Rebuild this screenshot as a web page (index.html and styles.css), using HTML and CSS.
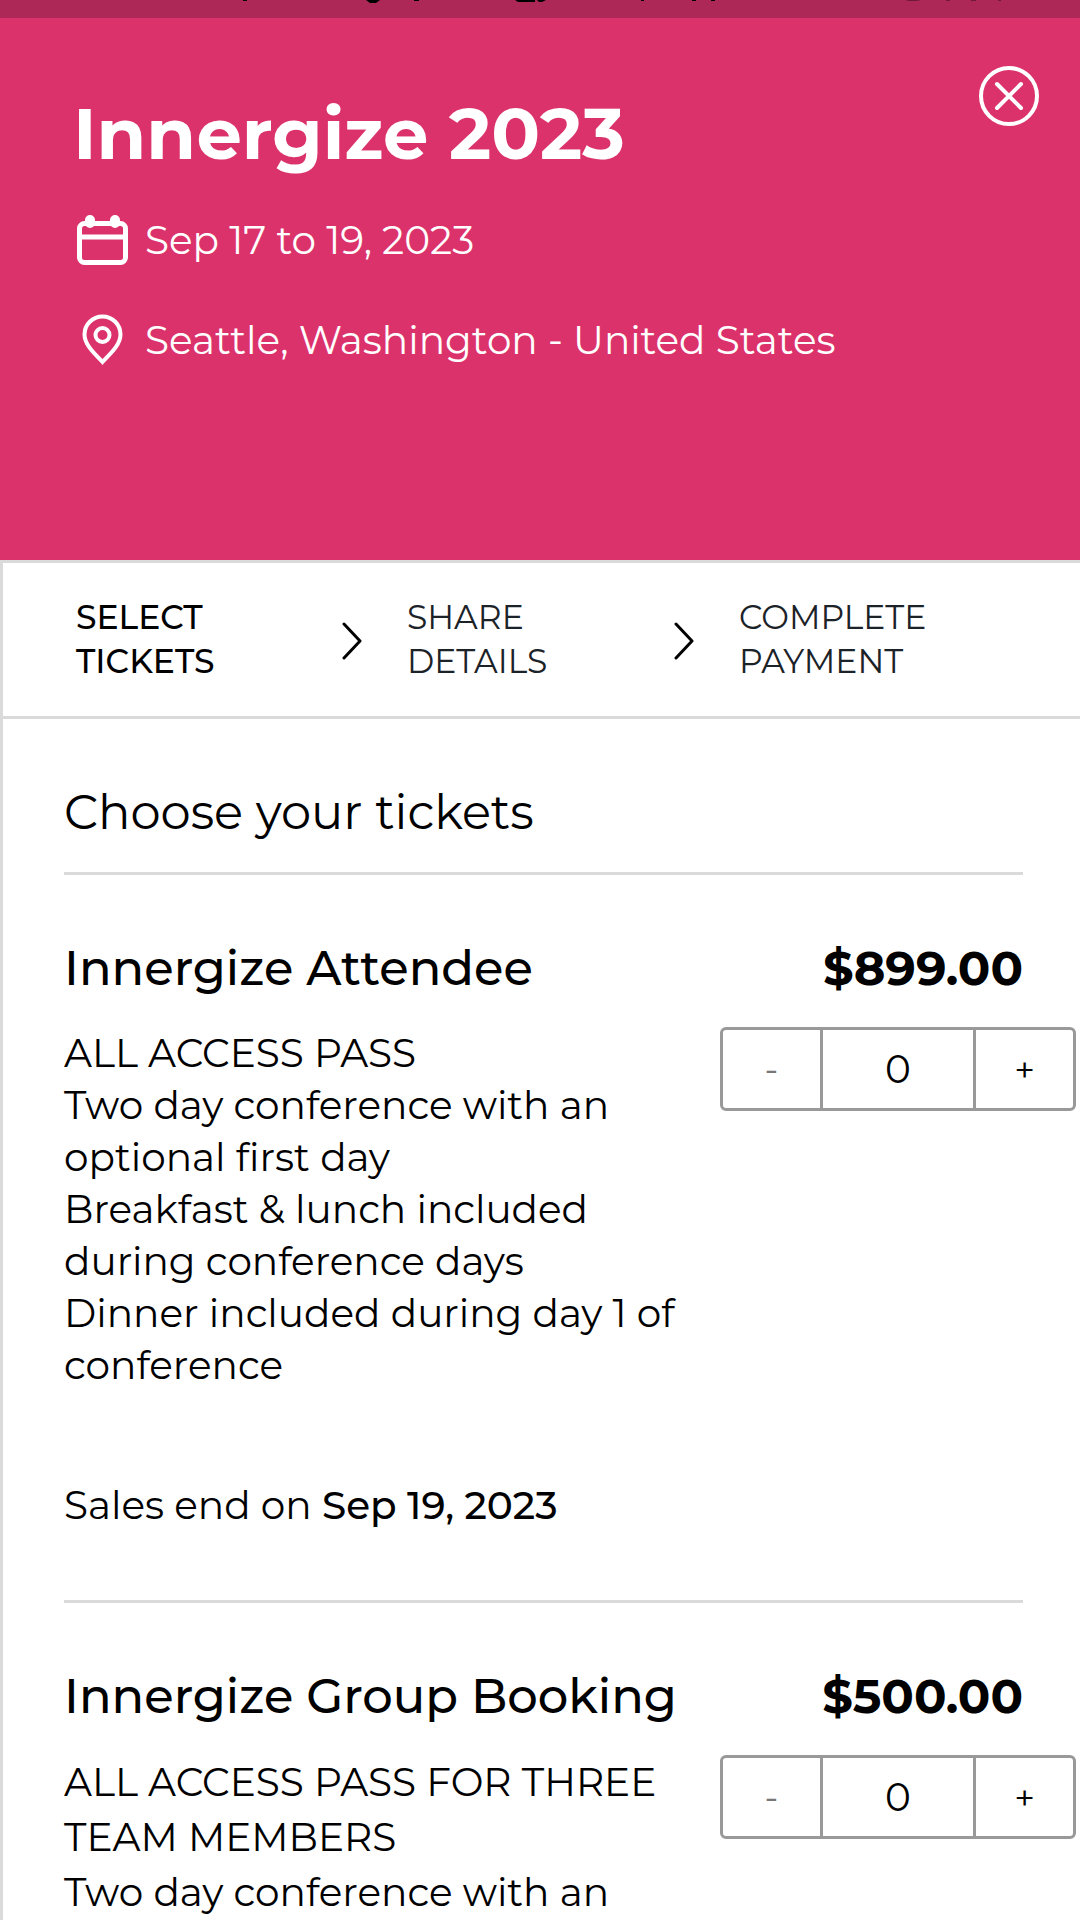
FILE: index.html
```html
<!DOCTYPE html>
<html lang="en">
<head>
<meta charset="utf-8">
<meta name="viewport" content="width=device-width, initial-scale=1">
<title>Innergize 2023</title>
<link rel="stylesheet" href="styles.css">
</head>
<body>
<header class="event">
  <div class="status" aria-hidden="true">
    <svg class="status-marks" viewBox="0 0 1080 18" preserveAspectRatio="none">
      <path d="M243 0h4v1h-4zM366 0h14l-4 3h-6zM414 0h5v1h-5zM515 0h20v2h-17zM537 0h9l-4 2h-3zM641 0h3v1h-3zM692 0h4v1h-4zM711 0h4v1h-4z"/>
      <path class="faint" d="M905 0h16l-4 1h-8zM946 0h4v1h-4zM971 0h5v1h-5zM998 0h3v1h-3z"/>
    </svg>
  </div>
  <div class="event-body">
    <div class="event-info">
      <h1 class="event-title">Innergize 2023</h1>
      <p class="event-meta">
        <svg class="meta-icon" viewBox="-2 0 56 54" fill="none" stroke="currentColor" stroke-width="5">
          <rect x="4.500" y="10.500" width="46" height="39" rx="5"/>
          <path d="M4 24h46"/>
          <path d="M15 10V7M40 10V7" stroke-width="10" stroke-linecap="round"/>
        </svg>
        Sep 17 to 19, 2023
      </p>
      <p class="event-meta">
        <svg class="meta-icon" viewBox="-2 0 56 54" fill="none" stroke="currentColor" stroke-width="4">
          <path d="M27.500 49C20 41 9.500 32 9.500 21.500a18 18 0 0 1 36 0C45.500 32 35 41 27.500 49z"/>
          <circle cx="27.500" cy="22" r="7"/>
        </svg>
        Seattle, Washington - United States
      </p>
    </div>
    <button class="close" type="button" aria-label="Close">
      <svg class="close-icon" viewBox="0 0 62 62" fill="none" stroke="currentColor" stroke-width="4" stroke-linecap="round">
        <circle cx="31" cy="31" r="28"/>
        <path d="M19 19l24 24M43 19L19 43"/>
      </svg>
    </button>
  </div>
</header>
<main class="panel">
  <ol class="steps">
    <li class="step step-current">Select<br>tickets</li>
    <li class="step">
      <svg class="chevron" viewBox="0 0 20 38" fill="none" stroke="currentColor" stroke-width="3" stroke-linecap="round" stroke-linejoin="round"><path d="M2 2l16 17L2 36"/></svg>
      <span>Share<br>details</span>
    </li>
    <li class="step">
      <svg class="chevron" viewBox="0 0 20 38" fill="none" stroke="currentColor" stroke-width="3" stroke-linecap="round" stroke-linejoin="round"><path d="M2 2l16 17L2 36"/></svg>
      <span>Complete<br>payment</span>
    </li>
  </ol>
  <section class="tickets">
    <h2 class="tickets-title">Choose your tickets</h2>
    <article class="ticket">
      <div class="ticket-head">
        <h3 class="ticket-name">Innergize Attendee</h3>
        <strong class="price">$899.00</strong>
      </div>
      <div class="ticket-body">
        <div class="ticket-text">
          <p class="desc">ALL ACCESS PASS<br>Two day conference with an<br>optional first day<br>Breakfast &amp; lunch included<br>during conference days<br>Dinner included during day 1 of<br>conference</p>
          <p class="sales">Sales end on <b class="date">Sep 19, 2023</b></p>
        </div>
        <div class="stepper">
          <button class="step-btn" type="button" aria-label="Remove one Attendee ticket" disabled>-</button>
          <input class="qty" type="text" inputmode="numeric" value="0" aria-label="Attendee ticket quantity">
          <button class="step-btn" type="button" aria-label="Add one Attendee ticket">+</button>
        </div>
      </div>
    </article>
    <article class="ticket">
      <div class="ticket-head">
        <h3 class="ticket-name">Innergize Group Booking</h3>
        <strong class="price">$500.00</strong>
      </div>
      <div class="ticket-body">
        <div class="ticket-text">
          <p class="desc desc-loose">ALL ACCESS PASS FOR THREE<br>TEAM MEMBERS<br>Two day conference with an</p>
        </div>
        <div class="stepper">
          <button class="step-btn" type="button" aria-label="Remove one Group Booking ticket" disabled>-</button>
          <input class="qty" type="text" inputmode="numeric" value="0" aria-label="Group Booking ticket quantity">
          <button class="step-btn" type="button" aria-label="Add one Group Booking ticket">+</button>
        </div>
      </div>
    </article>
  </section>
</main>
</body>
</html>
```
FILE: styles.css
```css
* { box-sizing: border-box; }

body {
  margin: 0;
  background: #fff;
  color: #000;
  font-family: Montserrat, Inter, "Open Sans", sans-serif;
  font-size: 39px;
  font-weight: 400;
  line-height: 52px;
  overflow: hidden;
}

h1, h2, h3, p, ol { margin: 0; padding: 0; }

/* Event banner */
.event {
  min-height: 560px;
  background: #dc326c;
  color: #fff;
}
.status { height: 18px; background: #ad2856; }
.status-marks { display: block; width: 100%; height: 18px; fill: #000; }
.faint { fill: #701a38; }
.event-body {
  display: flex;
  justify-content: space-between;
  align-items: flex-start;
  padding: 47px 40px 0 73px;
}
.event-info { padding-top: 18px; }
.event-title {
  margin-bottom: 30px;
  font-size: 72px;
  font-weight: 700;
  line-height: 100px;
}
.event-meta {
  display: flex;
  align-items: center;
  gap: 16px;
  margin-bottom: 46px;
}
.meta-icon { flex: none; width: 56px; height: 54px; }
.close {
  padding: 0;
  border: 0;
  background: none;
  color: inherit;
  cursor: pointer;
}
.close-icon { display: block; width: 62px; height: 62px; }

/* Checkout steps */
.panel {
  border-top: 3px solid #dadada;
  border-left: 3px solid #dadada;
}
.steps {
  display: grid;
  grid-template-columns: 266px 332px 1fr;
  padding: 32px 0 33px 73px;
  border-bottom: 3px solid #dadada;
  list-style: none;
  font-size: 33px;
  line-height: 44px;
  text-transform: uppercase;
}
.step { display: flex; align-items: center; gap: 45px; color: #1b2228; }
.step-current { color: #000; font-weight: 500; }
.chevron { width: 20px; height: 38px; margin-top: 4px; color: #000; }

/* Ticket list */
.tickets { padding: 61px 57px 0 61px; }
.tickets-title {
  padding-bottom: 28px;
  font-size: 48px;
  font-weight: 400;
  line-height: 64px;
}
.ticket { padding: 59px 0 69px; border-top: 3px solid #dadada; }
.ticket-head {
  display: flex;
  justify-content: space-between;
  margin-bottom: 25px;
  font-size: 48px;
  line-height: 68px;
}
.ticket-name { font-size: 48px; font-weight: 500; }
.price { font-weight: 700; }
.ticket-body {
  display: flex;
  justify-content: space-between;
  align-items: flex-start;
  margin-right: -53px;
}
.ticket-text { white-space: nowrap; }
.desc-loose { line-height: 55px; }
.sales { margin-top: 88px; }
.date { font-weight: 500; }

/* Quantity control */
.stepper {
  display: flex;
  width: 356px;
  height: 84px;
  border: 3px solid #999;
  border-radius: 6px;
}
.step-btn {
  flex: 1;
  padding: 0;
  border: 0;
  background: none;
  color: #000;
  font: inherit;
  font-size: 36px;
}
.step-btn:disabled { color: #777; }
.qty {
  width: 156px;
  padding: 0;
  border: solid #999;
  border-width: 0 3px;
  background: none;
  color: #000;
  font: inherit;
  text-align: center;
}
```
